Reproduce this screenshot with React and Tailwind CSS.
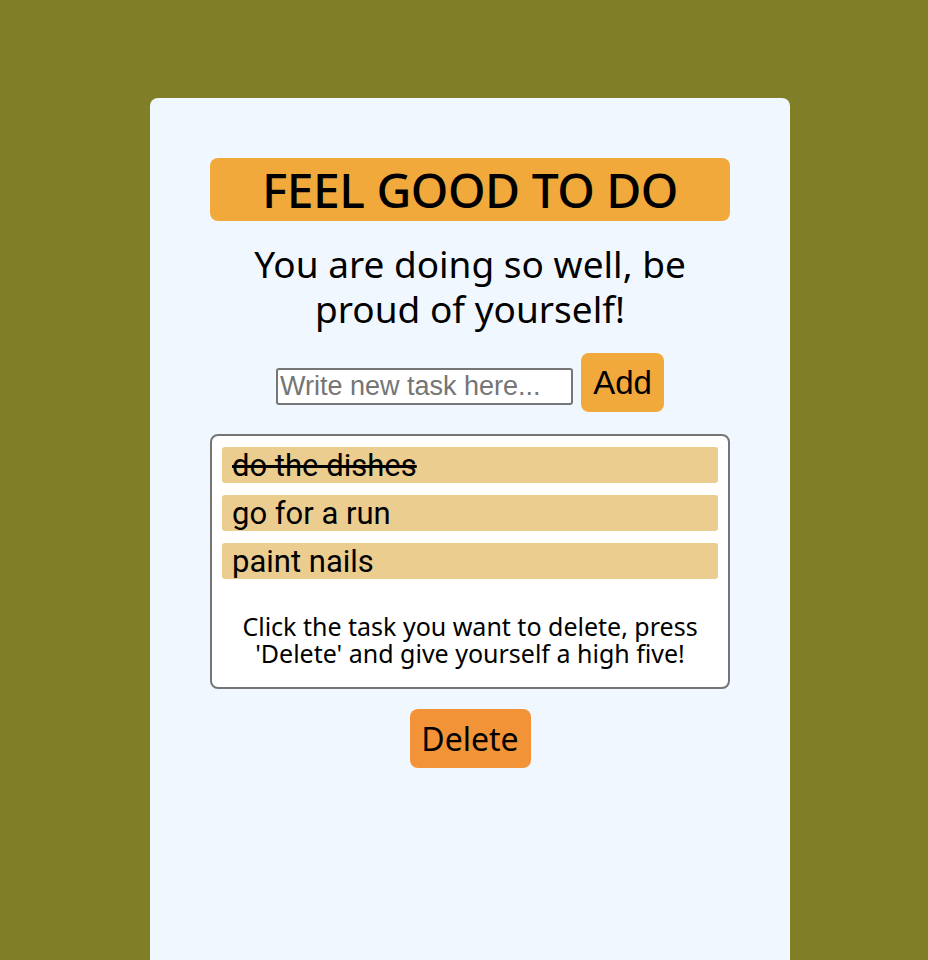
import React, { useState } from 'react';

const initialTasks = [
  { id: 1, text: 'do the dishes', done: true },
  { id: 2, text: 'go for a run', done: false },
  { id: 3, text: 'paint nails', done: false },
];

function TaskItem({ task, onToggle }) {
  return (
    <li
      onClick={() => onToggle(task.id)}
      className={`h-[36px] bg-[#ebcd8f] rounded-[3px] pl-[10px] flex items-center text-[31px] leading-none font-['Roboto',sans-serif] cursor-pointer ${task.done ? 'line-through' : ''}`}
    >
      {task.text}
    </li>
  );
}

export default function App() {
  const [tasks, setTasks] = useState(initialTasks);
  const [draft, setDraft] = useState('');

  const addTask = () => {
    if (!draft.trim()) return;
    setTasks((prev) => [...prev, { id: Date.now(), text: draft.trim(), done: false }]);
    setDraft('');
  };

  const toggleTask = (id) => {
    setTasks((prev) => prev.map((t) => (t.id === id ? { ...t, done: !t.done } : t)));
  };

  const deleteDone = () => {
    setTasks((prev) => prev.filter((t) => !t.done));
  };

  return (
    <div className="min-h-[960px] bg-[#807f27] pt-[98px] font-['Noto_Sans',sans-serif] text-black">
      <div className="ml-[150px] w-[640px] min-h-[862px] bg-[#f0f7fe] rounded-t-[8px] pt-[60px] flex flex-col items-center">
        {/* Title */}
        <h1 className="w-[520px] h-[63px] bg-[#f2a93b] rounded-[8px] flex items-center justify-center text-[48px] font-medium leading-none tracking-[-0.5px]">
          FEEL GOOD TO DO
        </h1>

        <p className="mt-[20px] w-[480px] text-center text-[37px] leading-[45px]">
          You are doing so well, be proud of yourself!
        </p>

        {/* New task */}
        <div className="mt-[22px] flex items-center gap-[8px]">
          <input
            value={draft}
            onChange={(e) => setDraft(e.target.value)}
            placeholder="Write new task here..."
            className="mt-[7px] w-[297px] h-[37px] border-2 border-[#767676] rounded-[3px] bg-white px-[2px] text-[27px] font-['Liberation_Sans',sans-serif] placeholder:text-[#757575] outline-none"
          />
          <button
            onClick={addTask}
            className="w-[83px] h-[59px] bg-[#f2a93b] rounded-[8px] text-[33px] font-['Liberation_Sans',sans-serif]"
          >
            Add
          </button>
        </div>

        {/* Task list */}
        <div className="mt-[22px] w-[520px] bg-white border-2 border-[#757575] rounded-[8px] px-[10px] pt-[11px] pb-[20px]">
          <ul className="flex flex-col gap-[12px]">
            {tasks.map((task) => (
              <TaskItem key={task.id} task={task} onToggle={toggleTask} />
            ))}
          </ul>
          <p className="mt-[34px] text-center text-[25px] leading-[27px]">
            Click the task you want to delete, press 'Delete' and give yourself a high five!
          </p>
        </div>

        <button
          onClick={deleteDone}
          className="mt-[20px] w-[121px] h-[59px] bg-[#f29338] rounded-[8px] text-[32px]"
        >
          Delete
        </button>
      </div>
    </div>
  );
}
